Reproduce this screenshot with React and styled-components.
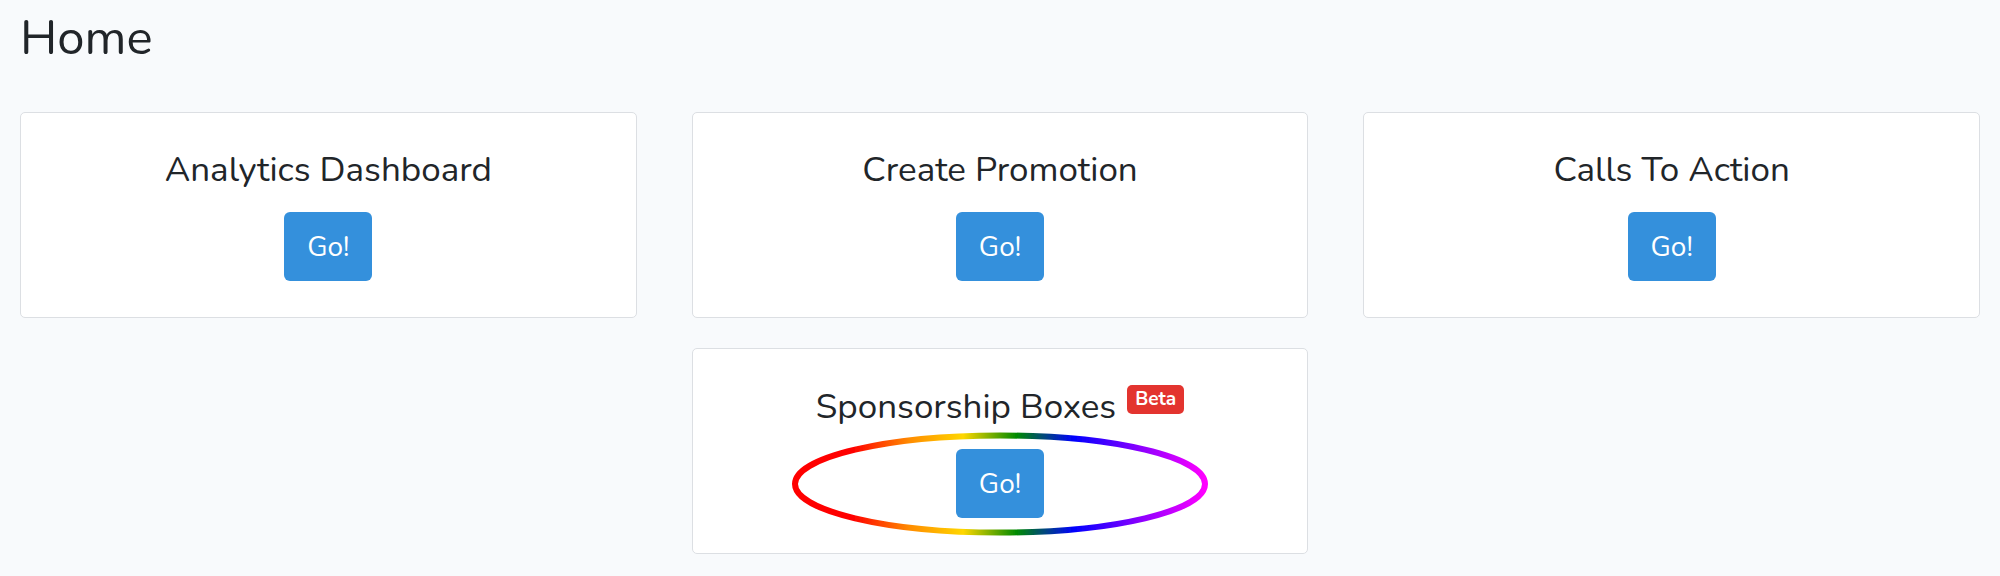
import React from 'react';
import styled, { createGlobalStyle } from 'styled-components';

const Global = createGlobalStyle`
  html, body { margin: 0; padding: 0; background: #f8fafc; }
  body {
    font-family: Nunito, Lato, "Noto Sans", sans-serif;
    color: #212529;
    -webkit-font-smoothing: antialiased;
  }
`;

const Page = styled.main`
  padding: 10px 20px 0;
`;

const Heading = styled.h1`
  margin: 0 0 46px;
  font-size: 49px;
  font-weight: 400;
  line-height: 56px;
`;

const Grid = styled.div`
  display: grid;
  grid-template-columns: repeat(3, 1fr);
  column-gap: 55px;
  row-gap: 30px;
`;

const Card = styled.section`
  grid-column: ${(p) => p.$col || 'auto'};
  box-sizing: border-box;
  height: 206px;
  background: #fff;
  border: 1px solid #dcdfe3;
  border-radius: 5px;
  display: flex;
  flex-direction: column;
  align-items: center;
  padding-top: 36px;
`;

const CardTitle = styled.h3`
  margin: 0 0 21px;
  font-size: 35px;
  font-weight: 400;
  line-height: 42px;
  white-space: nowrap;
`;

const Badge = styled.span`
  display: inline-block;
  margin-left: 11px;
  padding: 5px 8px 5px;
  font-size: 19px;
  font-weight: 700;
  line-height: 19px;
  color: #fff;
  background: #e3342f;
  border-radius: 5px;
  vertical-align: 13px;
`;

const ButtonWrap = styled.div`
  position: relative;
  display: flex;
  justify-content: center;
`;

const GoButton = styled.button`
  position: relative;
  z-index: 1;
  box-sizing: border-box;
  height: 69px;
  padding: 0 23px;
  border: none;
  border-radius: 6px;
  background: #3490dc;
  color: #fff;
  font-family: inherit;
  font-size: 28px;
  line-height: 1;
  cursor: pointer;
`;

const Halo = styled.svg`
  position: absolute;
  left: 50%;
  top: 50%;
  width: 416px;
  height: 103px;
  transform: translate(-50%, -50%);
  pointer-events: none;
  overflow: visible;
`;

const RainbowRing = () => (
  <Halo viewBox="0 0 416 103">
    <defs>
      <linearGradient id="rainbow" x1="0" y1="0" x2="1" y2="0">
        <stop offset="0" stopColor="#ff0000" />
        <stop offset="0.14" stopColor="#ff0000" />
        <stop offset="0.28" stopColor="#ff8c00" />
        <stop offset="0.41" stopColor="#ffd700" />
        <stop offset="0.54" stopColor="#008a00" />
        <stop offset="0.68" stopColor="#0000ff" />
        <stop offset="0.84" stopColor="#8a00ff" />
        <stop offset="1" stopColor="#ff00ff" />
      </linearGradient>
      <filter id="soft" x="-5%" y="-20%" width="110%" height="140%">
        <feGaussianBlur stdDeviation="0.6" />
      </filter>
    </defs>
    <ellipse
      cx="208"
      cy="51.5"
      rx="205"
      ry="48.5"
      fill="none"
      stroke="url(#rainbow)"
      strokeWidth="6"
      filter="url(#soft)"
    />
  </Halo>
);

const cards = [
  { title: 'Analytics Dashboard' },
  { title: 'Create Promotion' },
  { title: 'Calls To Action' },
  { title: 'Sponsorship Boxes', beta: true, col: '2' },
];

export default function App() {
  return (
    <>
      <Global />
      <Page>
        <Heading>Home</Heading>
        <Grid>
          {cards.map((c) => (
            <Card key={c.title} $col={c.col}>
              <CardTitle>
                {c.title}
                {c.beta && <Badge>Beta</Badge>}
              </CardTitle>
              <ButtonWrap>
                {c.beta && <RainbowRing />}
                <GoButton>Go!</GoButton>
              </ButtonWrap>
            </Card>
          ))}
        </Grid>
      </Page>
    </>
  );
}
